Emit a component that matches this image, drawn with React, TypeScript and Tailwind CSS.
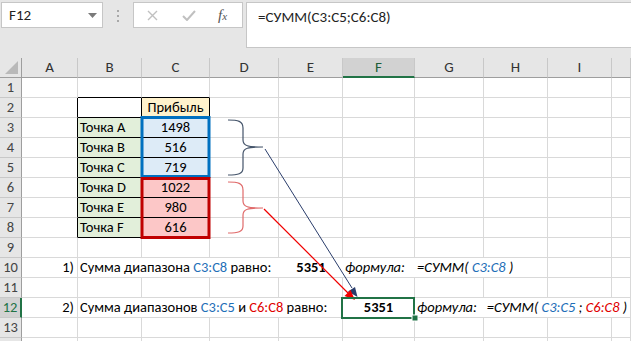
import React from 'react';

const font = { fontFamily: 'Carlito, "Liberation Sans", Arial, sans-serif' };

const cols = ['A', 'B', 'C', 'D', 'E', 'F', 'G', 'H', 'I', ''];
const grid = 'border-r border-b border-[#d9d9d9]';

const points = [
  { name: 'Точка A', value: '1498', fill: 'bg-[#ddebf7]' },
  { name: 'Точка B', value: '516', fill: 'bg-[#ddebf7]' },
  { name: 'Точка C', value: '719', fill: 'bg-[#ddebf7]' },
  { name: 'Точка D', value: '1022', fill: 'bg-[#fcc7c7]' },
  { name: 'Точка E', value: '980', fill: 'bg-[#fcc7c7]' },
  { name: 'Точка F', value: '616', fill: 'bg-[#fcc7c7]' },
];

const RowHead: React.FC<{ n?: number; active?: boolean }> = ({ n, active }) => (
  <div
    className={`flex items-center justify-center border-b border-[#c8c8c8] text-[14.5px] ${
      active
        ? 'bg-[#d2d2d2] text-[#217346] border-r-2 border-r-[#217346]'
        : 'bg-[#e6e6e6] text-[#444] border-r border-r-[#9e9e9e]'
    }`}
  >
    {n}
  </div>
);

const Empty: React.FC<{ n: number }> = ({ n }) => (
  <>
    {Array.from({ length: n }).map((_, i) => (
      <div key={i} className={grid} />
    ))}
  </>
);

const Blue: React.FC<{ children: React.ReactNode }> = ({ children }) => (
  <span className="text-[#1f6fb8]">{children}</span>
);
const Red: React.FC<{ children: React.ReactNode }> = ({ children }) => (
  <span className="text-[#e00000]">{children}</span>
);

const Toolbar = () => (
  <div className="flex h-[58px] items-start bg-[#e6e6e6] pl-[1px] pt-[2px]">
    <div className="flex h-[26px] w-[102px] items-center justify-between border border-[#c6c6c6] bg-white pl-[7px] pr-[5px] text-[15px] text-[#222]">
      <span>F12</span>
      <svg width="9" height="5" viewBox="0 0 9 5">
        <path d="M0 0h9L4.5 5z" fill="#7a7a7a" />
      </svg>
    </div>
    <div className="ml-[14px] mt-[8px] flex w-[2px] flex-col gap-[3px]">
      <div className="h-[2px] w-[2px] bg-[#a8a8a8]" />
      <div className="h-[2px] w-[2px] bg-[#a8a8a8]" />
      <div className="h-[2px] w-[2px] bg-[#a8a8a8]" />
    </div>
    <div className="ml-[14px] flex h-[26px] w-[110px] items-center border border-[#c6c6c6] bg-white">
      <svg className="ml-[13px]" width="11" height="11" viewBox="0 0 11 11">
        <path d="M1 1l9 9M10 1l-9 9" stroke="#c0c0c0" strokeWidth="1.4" />
      </svg>
      <svg className="ml-[24px]" width="14" height="11" viewBox="0 0 14 11">
        <path d="M1 6l4 4 8-9" stroke="#c0c0c0" strokeWidth="2" fill="none" />
      </svg>
      <span
        className="ml-[22px] text-[15px] italic text-[#555]"
        style={{ fontFamily: '"Liberation Serif", serif' }}
      >
        f<span className="text-[11px]">x</span>
      </span>
    </div>
    <div className="ml-[3px] h-[46px] flex-1 border-y border-l border-[#c6c6c6] bg-white pl-[11px] pt-[3px] text-[15px] text-[#222]">
      =СУММ(C3:C5;C6:C8)
    </div>
  </div>
);

const Overlay = () => (
  <svg className="pointer-events-none absolute left-0 top-0" width="631" height="341">
    {/* thick range borders */}
    <rect x="142" y="117.5" width="67" height="59" fill="none" stroke="#0070c0" strokeWidth="3" />
    <rect x="142" y="178.5" width="67" height="59" fill="none" stroke="#c00000" strokeWidth="3" />
    {/* braces */}
    <path
      d="M228 120C238 120 243 121 243 128L243 140C243 146 248 147 263 147C248 147 243 148 243 154L243 168C243 174 238 175 228 175"
      fill="none"
      stroke="#44546a"
      strokeWidth="1.2"
    />
    <path
      d="M228 182C238 182 243 183 243 190L243 201C243 207 248 208 263 208C248 208 243 209 243 215L243 226C243 232 238 233 228 233"
      fill="none"
      stroke="#e06a6a"
      strokeWidth="1.2"
    />
    {/* arrows */}
    <path d="M265 149L352 288" stroke="#2a3d6b" strokeWidth="1" fill="none" />
    <path d="M357.5 297L348 291.5L355 287z" fill="#2a3d6b" />
    <path d="M264 209L348 293" stroke="#f00000" strokeWidth="1.2" fill="none" />
    <path d="M355 300L344.5 296L350.5 290z" fill="#f00000" />
    {/* active cell F12 */}
    <rect x="342" y="298" width="72" height="20" fill="none" stroke="#217346" strokeWidth="2" />
    <rect x="412" y="315" width="6" height="6" fill="#217346" stroke="#fff" strokeWidth="1" />
  </svg>
);

export default function App() {
  return (
    <div className="relative h-[341px] w-[631px] overflow-hidden bg-white" style={font}>
      <Toolbar />
      <div className="grid auto-rows-[20px] grid-cols-[22px_56px_64px_68px_69px_64px_72px_69px_64px_64px_1fr] text-[14.5px] leading-none text-black">
        {/* column headers */}
        <div className="relative border-b border-r border-[#9e9e9e] bg-[#e6e6e6]">
          <svg className="absolute bottom-[3px] right-[3px]" width="13" height="13" viewBox="0 0 13 13">
            <path d="M13 0V13H0z" fill="#b9b9b9" />
          </svg>
        </div>
        {cols.map((c) =>
          c === 'F' ? (
            <div
              key={c}
              className="flex items-center justify-center border-b-2 border-r border-b-[#217346] border-r-[#c8c8c8] bg-[#d2d2d2] text-[15px] text-[#1e5e3a]"
            >
              {c}
            </div>
          ) : (
            <div
              key={c || 'j'}
              className="flex items-center justify-center border-b border-r border-b-[#9e9e9e] border-r-[#c8c8c8] bg-[#e6e6e6] text-[15px] text-[#333]"
            >
              {c}
            </div>
          )
        )}

        {/* row 1 */}
        <RowHead n={1} />
        <div className={grid} />
        <div className="border-b border-r border-b-black border-r-[#d9d9d9]" />
        <div className="border-b border-r border-b-black border-r-[#d9d9d9]" />
        <Empty n={7} />

        {/* row 2 */}
        <RowHead n={2} />
        <div className="border-b border-r border-b-[#d9d9d9] border-r-black" />
        <div className="border-b border-r border-black" />
        <div className="flex items-end justify-center border-b border-r border-black bg-[#fff2cc] pb-[3px]">
          Прибыль
        </div>
        <Empty n={7} />

        {/* rows 3-8 */}
        {points.map((p, i) => (
          <React.Fragment key={p.name}>
            <RowHead n={i + 3} />
            <div className="border-b border-r border-b-[#d9d9d9] border-r-black" />
            <div className="flex items-end border-b border-r border-black bg-[#e2efda] pb-[3px] pl-[2px]">
              {p.name}
            </div>
            <div className={`flex items-end justify-center border-b border-r border-black pb-[3px] ${p.fill}`}>
              {p.value}
            </div>
            <Empty n={7} />
          </React.Fragment>
        ))}

        {/* row 9 */}
        <RowHead n={9} />
        <Empty n={10} />

        {/* row 10 */}
        <RowHead n={10} />
        <div className={`${grid} flex items-end justify-end pb-[3px] pr-[3px]`}>1)</div>
        <div className={`${grid} col-span-7 flex items-end whitespace-nowrap pb-[3px]`}>
          <span className="w-[201px] pl-[2px]">
            Сумма диапазона <Blue>C3:C8</Blue> равно:
          </span>
          <span className="w-[64px] text-center font-bold">5351</span>
          <span className="w-[72px] pl-[2px] italic">формула:</span>
          <span className="pl-[2px] italic">
            =СУММ( <Blue>C3:C8</Blue> )
          </span>
        </div>
        <Empty n={2} />

        {/* row 11 */}
        <RowHead n={11} />
        <Empty n={10} />

        {/* row 12 */}
        <RowHead n={12} active />
        <div className={`${grid} flex items-end justify-end pb-[3px] pr-[3px]`}>2)</div>
        <div className={`${grid} col-span-4 flex items-end whitespace-nowrap pb-[3px] pl-[2px]`}>
          Сумма диапазонов&nbsp;<Blue>C3:C5</Blue>&nbsp;и&nbsp;<Red>C6:C8</Red>&nbsp;равно:
        </div>
        <div className={`${grid} flex items-end justify-center pb-[3px] font-bold`}>5351</div>
        <div className={`${grid} col-span-4 flex items-end whitespace-nowrap pb-[3px] pl-[2px] italic`}>
          формула:&nbsp;&nbsp;&nbsp;=СУММ(&nbsp;<Blue>C3:C5</Blue>&nbsp;;&nbsp;<Red>C6:C8</Red>&nbsp;)
        </div>

        {/* rows 13-14 */}
        <RowHead n={13} />
        <Empty n={10} />
        <RowHead />
        <Empty n={10} />
      </div>
      <Overlay />
    </div>
  );
}
